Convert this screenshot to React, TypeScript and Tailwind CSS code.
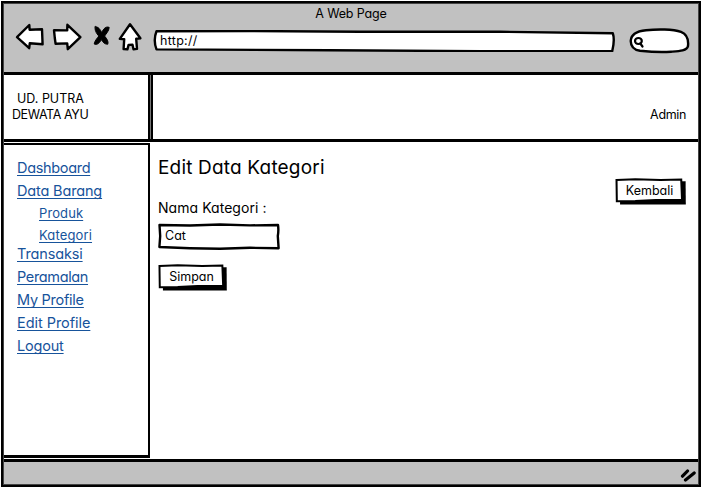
import type { ReactNode } from 'react';

const outline = { fill: 'white', stroke: 'black', strokeWidth: 2.4, strokeLinejoin: 'round', strokeLinecap: 'round' } as const;

function NavIcons() {
  return (
    <svg className="mt-4 ml-2 h-8 w-[132px] shrink-0" viewBox="12 20 132 32" {...outline}>
      <path d="M17 37.2 L29.3 25 L29.6 29.8 L42 29.2 L42.6 44.2 L29.8 43.2 L29.2 48.2 Z" />
      <path d="M54 30.2 L67.2 30.4 L67.4 24.8 L80.4 37.2 L67.8 49.2 L67.2 43.4 L55.6 43.8 L54.8 38 Z" />
      <g fill="black" stroke="black" strokeWidth="1">
        <path d="M95.2 26.8 C98 26.3 100.3 29.5 101.8 32.6 C103.5 28.5 106 26.1 109.2 27.4 C109 31 106 33.8 104.6 36.1 C107 39 108.7 41.5 107.8 44.2 C104.7 44.5 102.7 42 101.4 39.6 C99.5 43 97 45.4 94.2 44 C94.6 40.8 97.4 38.1 98.8 36 C96.3 33.4 94.4 30 95.2 26.8 Z" />
      </g>
      <path d="M130 24.2 L140.4 38.3 L136.2 38.8 L137 48.9 L133.5 49.2 L132.5 44.8 L128.6 44.9 L127.4 49.4 L123.6 49 L124.2 39.2 L119.8 38.9 Z" />
    </svg>
  );
}

function PushButton({ children, className }: { children: ReactNode; className: string }) {
  return (
    <button className={`relative h-[27px] text-[12.5px] leading-[20px] ${className}`}>
      <svg className="absolute inset-0 h-full w-full" viewBox="0 0 70 27" preserveAspectRatio="none">
        <path d="M5 4 L69.6 3.2 L69.8 26.6 L5 26.4 Z" fill="black" />
        <path d="M1.5 2 L20 1.2 L45 2 L65.3 1.6 L66.1 22 L40 22 L20 23 L1.8 23.2 Z" fill="white" stroke="black" strokeWidth="2" />
      </svg>
      <span className="relative -top-px">{children}</span>
    </button>
  );
}

const links = [
  { label: 'Dashboard', style: 'h-[23px] text-[14.5px] leading-[23px] tracking-[-0.32px]' },
  { label: 'Data Barang', style: 'h-[23px] text-[14.5px] leading-[23px] tracking-[-0.16px]' },
  { label: 'Produk', style: 'ml-[22px] h-[22px] text-[13px] leading-[22px] tracking-[0.1px]' },
  { label: 'Kategori', style: 'ml-[22px] h-[18px] text-[13px] leading-[22px] tracking-[0.14px]' },
  { label: 'Transaksi', style: 'h-[23px] text-[14.5px] leading-[23px] tracking-[-0.14px]' },
  { label: 'Peramalan', style: 'h-[23px] text-[14.5px] leading-[23px] tracking-[-0.36px]' },
  { label: 'My Profile', style: 'h-[23px] text-[14.5px] leading-[23px] tracking-[-0.26px]' },
  { label: 'Edit Profile', style: 'h-[23px] text-[14.5px] leading-[23px] tracking-[-0.05px]' },
  { label: 'Logout', style: 'h-[23px] text-[14.5px] leading-[23px] tracking-[-0.2px]' },
];

export default function App() {
  return (
    <div className="h-[488px] w-[702px] bg-white pt-px pl-px font-['Inter','Open_Sans',sans-serif] text-[13px] text-black [font-feature-settings:'cv11','ss03']">
      <div className="flex h-[486px] w-[700px] flex-col border-2 border-black bg-[#444444] p-px">
        <header className="h-[68px] shrink-0 bg-[#c1c1c1]">
          <div className="h-0 text-center text-[12.5px] leading-[20px] tracking-[-0.15px]">A Web Page</div>
          <div className="flex">
            <NavIcons />
            <div className="relative mt-[26px] ml-[9px] h-[22px] w-[462px]">
              <svg className="absolute inset-0 h-full w-full" viewBox="153 30 462 22" {...outline}>
                <path d="M156.5 31.2 L250 31 L360 31.8 L500 31.8 L612.8 33.2 Q615 40 612.2 51.3 L480 51.2 L330 50.2 L156.5 49.4 Q153 40 156.5 31.2 Z" />
              </svg>
              <span className="relative ml-[7px] text-[12.5px] leading-[21px] tracking-[0.3px]">http://</span>
            </div>
            <svg className="mt-6 ml-[13px] h-[26px] w-[62px]" viewBox="628 28 62 26" {...outline}>
              <path d="M630.7 41 C631 34 638 31 646 30.2 C657 29 673 29 681 31.8 C688 34.5 688.5 41 688 46 C687 51 679 51.2 671 51.7 C660 52.6 647 51.5 640 50.8 C633 49.8 630.8 45 630.7 41 Z" />
              <ellipse cx="638.4" cy="41" rx="3.4" ry="3" strokeWidth="2.2" />
              <path d="M640.4 43.6 L642.4 46.4" />
            </svg>
          </div>
        </header>

        <div className="flex h-[70px] shrink-0 border-y-3 border-black bg-white">
          <div className="w-[146px] shrink-0 border-r-2 border-black pt-4 pl-2 text-[12.5px] leading-4">
            <div className="pl-[5px]">UD. PUTRA</div>
            <div className="tracking-[-0.4px]">DEWATA AYU</div>
          </div>
          <div className="w-px bg-[#777777]" />
          <div className="flex-1 border-l-2 border-black pt-8 pr-3 text-right text-[12.5px] leading-4 tracking-[-0.35px]">Admin</div>
        </div>

        <div className="flex h-[317px] shrink-0 bg-white">
          <nav className="mt-px h-[315px] w-[146px] shrink-0 border-t-2 border-r-2 border-b-3 border-black pt-[11px] pl-[13px] text-[#17539b]">
            {links.map(({ label, style }) => (
              <div key={label} className={style}>
                <a className="underline decoration-1 underline-offset-2 [text-decoration-skip-ink:none]">{label}</a>
              </div>
            ))}
          </nav>
          <main className="flex flex-1 justify-between pt-[13px] pr-3 pl-2">
            <div>
              <h1 className="h-[26px] text-[19px] leading-[26px] tracking-[0.18px]">Edit Data Kategori</h1>
              <div className="mt-[17px] h-5 text-[14px] leading-5 tracking-[0.05px]">Nama Kategori :</div>
              <div className="relative mt-[5px] h-[27px] w-[122px]">
                <svg className="absolute inset-0 h-full w-full" viewBox="158 223 122 27" {...outline}>
                  <path d="M159.5 225 L190 225.5 L220 224.5 L250 225.4 L278 225 Q278.8 230 277.8 236 L278.6 248.2 L250 247.8 L220 248.8 L190 248.2 L159.4 247 L160.2 236 Z" />
                </svg>
                <span className="relative ml-[7px] text-[12.5px] leading-[26px]">Cat</span>
              </div>
              <PushButton className="mt-3.5 w-[69px] pr-[2px]">Simpan</PushButton>
            </div>
            <PushButton className="mt-[23px] w-[71px] pr-[2px]">Kembali</PushButton>
          </main>
        </div>

        <footer className="flex flex-1 items-center justify-end border-t-3 border-black bg-[#c1c1c1] pr-[2px]">
          <svg className="mt-1 h-4 w-4" viewBox="680 467 16 16" stroke="black" strokeWidth="3.2" strokeLinecap="round">
            <path d="M682.5 476.2 L687.5 471 M685.5 480 L694.2 473" />
          </svg>
        </footer>
      </div>
    </div>
  );
}
